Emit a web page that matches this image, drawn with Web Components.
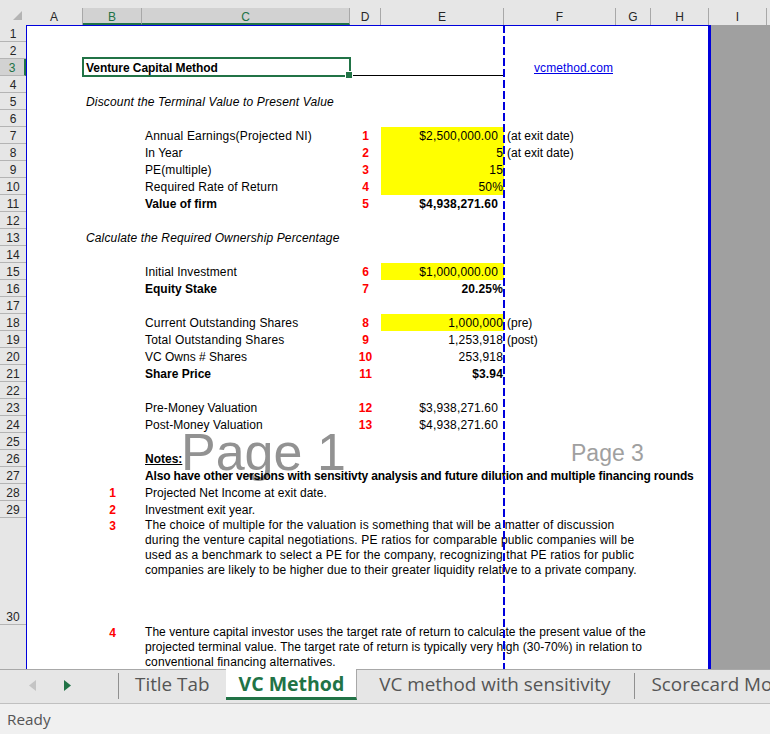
<!DOCTYPE html>
<html>
<head>
<meta charset="utf-8">
<title>VC Method</title>
<style>
  html, body { margin: 0; padding: 0; height: 100%; overflow: hidden; }
  body { font-family: "Liberation Sans", Arial, sans-serif; }
</style>
</head>
<body>
<xl-app>
  <xl-col-head></xl-col-head>
  <xl-body>
    <xl-row-head></xl-row-head>
    <xl-page>
      <xl-mark slot="marks" big>Page 1</xl-mark>
      <xl-mark slot="marks">Page 3</xl-mark>

      <xl-row></xl-row>
      <xl-row></xl-row>
      <xl-row><xl-cell col="b" bold style="letter-spacing:-.07px">Venture Capital Method</xl-cell><xl-cell col="d" line></xl-cell><xl-cell col="e" line></xl-cell><xl-cell col="f" link>vcmethod.com</xl-cell></xl-row>
      <xl-row></xl-row>
      <xl-row><xl-cell col="b" italic style="letter-spacing:.16px">Discount the Terminal Value to Present Value</xl-cell></xl-row>
      <xl-row></xl-row>
      <xl-row><xl-cell col="c" style="letter-spacing:.17px">Annual Earnings(Projected NI)</xl-cell><xl-cell col="d" num>1</xl-cell><xl-cell col="e" yellow money>$2,500,000.00</xl-cell><xl-cell col="f">(at exit date)</xl-cell></xl-row>
      <xl-row><xl-cell col="c">In Year</xl-cell><xl-cell col="d" num>2</xl-cell><xl-cell col="e" yellow right>5</xl-cell><xl-cell col="f">(at exit date)</xl-cell></xl-row>
      <xl-row><xl-cell col="c" style="letter-spacing:.1px">PE(multiple)</xl-cell><xl-cell col="d" num>3</xl-cell><xl-cell col="e" yellow right>15</xl-cell></xl-row>
      <xl-row><xl-cell col="c" style="letter-spacing:.13px">Required Rate of Return</xl-cell><xl-cell col="d" num>4</xl-cell><xl-cell col="e" yellow right>50%</xl-cell></xl-row>
      <xl-row><xl-cell col="c" bold>Value of firm</xl-cell><xl-cell col="d" num>5</xl-cell><xl-cell col="e" bold money>$4,938,271.60</xl-cell></xl-row>
      <xl-row></xl-row>
      <xl-row><xl-cell col="b" italic style="letter-spacing:.14px">Calculate the Required Ownership Percentage</xl-cell></xl-row>
      <xl-row></xl-row>
      <xl-row><xl-cell col="c" style="letter-spacing:.1px">Initial Investment</xl-cell><xl-cell col="d" num>6</xl-cell><xl-cell col="e" yellow money>$1,000,000.00</xl-cell></xl-row>
      <xl-row><xl-cell col="c" bold>Equity Stake</xl-cell><xl-cell col="d" num>7</xl-cell><xl-cell col="e" bold right>20.25%</xl-cell></xl-row>
      <xl-row></xl-row>
      <xl-row><xl-cell col="c" style="letter-spacing:.15px">Current Outstanding Shares</xl-cell><xl-cell col="d" num>8</xl-cell><xl-cell col="e" yellow right>1,000,000</xl-cell><xl-cell col="f">(pre)</xl-cell></xl-row>
      <xl-row><xl-cell col="c" style="letter-spacing:.2px">Total Outstanding Shares</xl-cell><xl-cell col="d" num>9</xl-cell><xl-cell col="e" right>1,253,918</xl-cell><xl-cell col="f">(post)</xl-cell></xl-row>
      <xl-row><xl-cell col="c">VC Owns # Shares</xl-cell><xl-cell col="d" num>10</xl-cell><xl-cell col="e" right>253,918</xl-cell></xl-row>
      <xl-row><xl-cell col="c" bold>Share Price</xl-cell><xl-cell col="d" num>11</xl-cell><xl-cell col="e" bold right>$3.94</xl-cell></xl-row>
      <xl-row></xl-row>
      <xl-row><xl-cell col="c" style="letter-spacing:.06px">Pre-Money Valuation</xl-cell><xl-cell col="d" num>12</xl-cell><xl-cell col="e" money>$3,938,271.60</xl-cell></xl-row>
      <xl-row><xl-cell col="c" style="letter-spacing:.06px">Post-Money Valuation</xl-cell><xl-cell col="d" num>13</xl-cell><xl-cell col="e" money>$4,938,271.60</xl-cell></xl-row>
      <xl-row></xl-row>
      <xl-row><xl-cell col="c" bold under>Notes:</xl-cell></xl-row>
      <xl-row><xl-cell col="c" bold style="letter-spacing:-.143px">Also have other versions with sensitivty analysis and future dilution and multiple financing rounds</xl-cell></xl-row>
      <xl-row><xl-cell col="b" num>1</xl-cell><xl-cell col="c" style="letter-spacing:.03px">Projected Net Income at exit date.</xl-cell></xl-row>
      <xl-row><xl-cell col="b" num>2</xl-cell><xl-cell col="c">Investment exit year.</xl-cell></xl-row>
      <xl-row tall><xl-cell col="b" num>3</xl-cell><xl-cell col="c" para><span style="letter-spacing:.148px">The choice of multiple for the valuation is something that will be a matter of discussion</span><br><span style="letter-spacing:.167px">during the venture capital negotiations. PE ratios for comparable public companies will be</span><br><span style="letter-spacing:.146px">used as a benchmark to select a PE for the company, recognizing that PE ratios for public</span><br><span style="letter-spacing:.095px">companies are likely to be higher due to their greater liquidity relative to a private company.</span></xl-cell></xl-row>
      <xl-row tall><xl-cell col="b" num>4</xl-cell><xl-cell col="c" para><span style="letter-spacing:.06px">The venture capital investor uses the target rate of return to calculate the present value of the</span><br><span style="letter-spacing:.05px">projected terminal value. The target rate of return is typically very high (30-70%) in relation to</span><br><span style="letter-spacing:.11px">conventional financing alternatives.</span></xl-cell></xl-row>
    </xl-page>
  </xl-body>
  <xl-tabs>
    <xl-tab>Title Tab</xl-tab>
    <xl-tab active>VC Method</xl-tab>
    <xl-tab plain>VC method with sensitivity</xl-tab>
    <xl-tab last>Scorecard Model</xl-tab>
  </xl-tabs>
  <xl-status>Ready</xl-status>
</xl-app>

<script>
// column widths of the sheet, left to right
const COLS = [["A", 57], ["B", 59], ["C", 208], ["D", 31], ["E", 123], ["F", 112], ["G", 35], ["H", 58], ["I", 58]]
const GREEN = "#217346"

function shadow(el, html) {
  el.attachShadow({ mode: "open" }).innerHTML = html
}

class XlApp extends HTMLElement {
  constructor() {
    super()
    shadow(this, `<style>
      :host { display: flex; flex-direction: column; width: 770px; height: 734px; overflow: hidden; }
    </style><slot></slot>`)
  }
}

class XlColHead extends HTMLElement {
  constructor() {
    super()
    const cells = COLS.map(([name, w]) => {
      const sel = name == "B" || name == "C" ? "sel" : ""
      return `<div class="col ${sel}" style="width:${w}px">${name}</div>`
    }).join("")
    shadow(this, `<style>
      :host { display: flex; height: 25px; padding-top: 8px; box-sizing: border-box; background: #e6e6e6; flex: none; }
      .corner { width: 26px; flex: none; display: flex; align-items: flex-end; justify-content: flex-end; box-sizing: border-box; padding: 0 4px 5px 0; }
      .col { flex: none; box-sizing: border-box; height: 17px; border-right: 1px solid #a8a8a8; display: flex; align-items: center; justify-content: center; font: 12px "Liberation Sans", sans-serif; color: #262626; padding-top: 1px; }
      .sel { background: #d2d2d2; color: ${GREEN}; border-bottom: 2px solid ${GREEN}; padding-top: 2px; }
    </style>
    <div class="corner"><svg width="9" height="9" viewBox="0 0 9 9"><path d="M9 0V9H0Z" fill="#b4b4b4"/></svg></div>${cells}`)
  }
}

class XlBody extends HTMLElement {
  constructor() {
    super()
    shadow(this, `<style>
      :host { display: flex; flex: 1; min-height: 0; background: #a0a0a0; }
    </style><slot></slot>`)
  }
}

class XlRowHead extends HTMLElement {
  constructor() {
    super()
    let rows = ""
    for (let i = 1; i <= 30; i++) {
      rows += `<div class="r ${i == 3 ? "sel" : ""} ${i == 30 ? "tall" : ""}">${i}</div>`
    }
    shadow(this, `<style>
      :host { display: block; width: 26px; flex: none; background: #e6e6e6; overflow: hidden; }
      .r { box-sizing: border-box; height: 17px; padding-top: 2px; border-bottom: 1px solid #b4b4b4; display: flex; align-items: center; justify-content: center; font: 12px "Liberation Sans", sans-serif; color: #262626; }
      .sel { background: #d2d2d2; color: ${GREEN}; border-right: 2px solid ${GREEN}; }
      .tall { height: 107px; align-items: flex-end; padding-bottom: 0; }
    </style>${rows}`)
  }
}

class XlPage extends HTMLElement {
  constructor() {
    super()
    shadow(this, `<style>
      :host { display: block; position: relative; width: 685px; flex: none; background: #fff; isolation: isolate; overflow: hidden; }
      :host::after { content: ""; position: absolute; inset: 0; box-sizing: border-box; border: solid #0000dc; border-width: 1px 3px 0 1px; }
      .break { position: absolute; left: 477px; top: 0; bottom: 0; width: 2px; background: repeating-linear-gradient(#0000dc 0 8px, transparent 8px 11px); z-index: 2; }
      .pick { position: absolute; left: 56px; top: 32px; width: 269px; height: 20px; box-sizing: border-box; border: 2px solid ${GREEN}; z-index: 2; }
      .pick i { position: absolute; right: -3px; bottom: -3px; width: 6px; height: 6px; background: ${GREEN}; outline: 1px solid #fff; }
    </style>
    <slot name="marks"></slot>
    <slot></slot>
    <div class="pick"><i></i></div>
    <div class="break"></div>`)
  }
}

class XlMark extends HTMLElement {
  constructor() {
    super()
    shadow(this, `<style>
      :host { position: absolute; left: 545px; top: 413px; z-index: -1; font: 23px/30px "Liberation Sans", sans-serif; color: #a0a0a0; white-space: nowrap; }
      :host([big]) { left: 155px; top: 397px; font-size: 52px; line-height: 60px; color: #929292; }
    </style><slot></slot>`)
  }
}

class XlRow extends HTMLElement {
  constructor() {
    super()
    const tracks = COLS.slice(0, 8).map(c => c[1] + "px").join(" ")
    shadow(this, `<style>
      :host { display: grid; grid-template-columns: ${tracks}; grid-template-rows: minmax(0, 1fr); height: 17px; font: 12px/19px "Liberation Sans", sans-serif; color: #000; }
      :host([tall]) { height: 107px; line-height: 17px; }
      :host(:last-child) { height: 44px; }
    </style><slot></slot>`)
  }
}

class XlCell extends HTMLElement {
  constructor() {
    super()
    shadow(this, `<style>
      :host { display: block; padding: 0 3px; white-space: nowrap; min-width: 0; grid-row: 1; }
      :host([col=b]) { grid-column: 2; }
      :host([col=c]) { grid-column: 3; }
      :host([col=d]) { grid-column: 4; }
      :host([col=e]) { grid-column: 5; }
      :host([col=f]) { grid-column: 6; }
      :host([bold]) { font-weight: bold; }
      :host([italic]) { font-style: italic; }
      :host([under]) { text-decoration: underline; }
      :host([num]) { color: #f00; font-weight: bold; text-align: center; }
      :host([yellow]) { background: #ff0; }
      :host([right]) { text-align: right; padding-right: 1px; letter-spacing: .15px; }
      :host([money]) { text-align: right; padding-right: 6px; letter-spacing: .15px; }
      :host([line]) { border-bottom: 1px solid #000; box-sizing: border-box; height: 17px; }
      :host([link]) { color: #0000e6; text-decoration: underline; padding-left: 30px; letter-spacing: .08px; }
      :host([para]) { line-height: 15px; }
    </style><slot></slot>`)
  }
}

class XlTabs extends HTMLElement {
  constructor() {
    super()
    shadow(this, `<style>
      :host { display: flex; height: 35px; box-sizing: border-box; background: #e6e6e6; border-top: 1px solid #a8a8a8; border-bottom: 1px solid #c0c0c0; flex: none; }
      .nav { width: 118px; flex: none; display: flex; align-items: flex-start; padding: 10px 0 0 29px; box-sizing: border-box; gap: 28px; }
      svg { display: block; }
    </style>
    <div class="nav">
      <svg width="7" height="11" viewBox="0 0 7 11"><path d="M7 0V11L0 5.5Z" fill="#c4c4c4"/></svg>
      <svg width="7" height="11" viewBox="0 0 7 11"><path d="M0 0V11L7 5.5Z" fill="${GREEN}"/></svg>
    </div>
    <slot></slot>`)
  }
}

class XlTab extends HTMLElement {
  constructor() {
    super()
    shadow(this, `<style>
      :host { display: block; flex: none; box-sizing: border-box; height: 26px; margin-top: 3px; padding: 0 17px 0 16px; border-left: 1px solid #909090; font: 18.85px/23px "Open Sans", sans-serif; color: #555; white-space: nowrap; }
      :host([active]) { height: 31px; margin-top: -1px; padding: 0 12px; border: solid #a8a8a8; border-width: 0 1px 3px 0; border-bottom-color: ${GREEN}; background: #fff; color: ${GREEN}; font-size: 19.5px; font-weight: bold; line-height: 29px; }
      :host([plain]) { border-left: 0; padding: 0 24px 0 22px; }
      :host([last]) { flex: 0 0 136px; overflow: hidden; padding-right: 0; }
    </style><slot></slot>`)
  }
}

class XlStatus extends HTMLElement {
  constructor() {
    super()
    shadow(this, `<style>
      :host { display: block; height: 30px; flex: none; box-sizing: border-box; background: #f0f0f0; padding-left: 7px; font: 15.3px/30px "Open Sans", sans-serif; color: #555; }
    </style><slot></slot>`)
  }
}

customElements.define("xl-app", XlApp)
customElements.define("xl-col-head", XlColHead)
customElements.define("xl-body", XlBody)
customElements.define("xl-row-head", XlRowHead)
customElements.define("xl-page", XlPage)
customElements.define("xl-mark", XlMark)
customElements.define("xl-row", XlRow)
customElements.define("xl-cell", XlCell)
customElements.define("xl-tabs", XlTabs)
customElements.define("xl-tab", XlTab)
customElements.define("xl-status", XlStatus)
</script>
</body>
</html>
